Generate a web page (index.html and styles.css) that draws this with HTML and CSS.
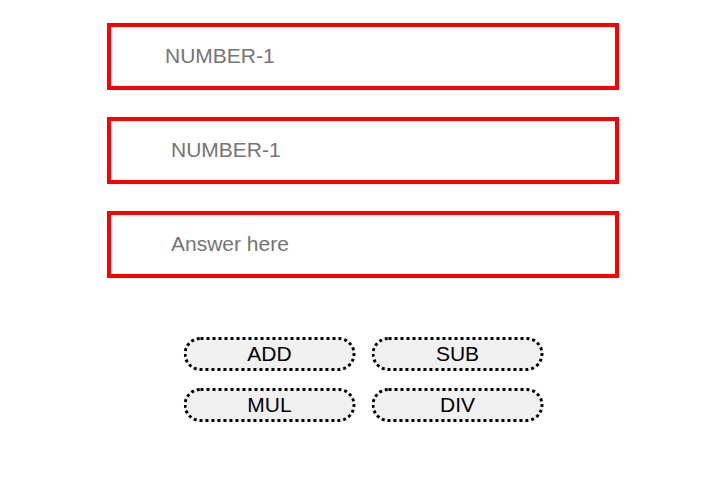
FILE: index.html
```html
<!DOCTYPE html>
<html>
<head>
<meta charset="utf-8">
<link rel="stylesheet" href="styles.css">
</head>
<body>
<div class="calc">
  <input class="field field-first" type="text" placeholder="NUMBER-1">
  <input class="field" type="text" placeholder="NUMBER-1">
  <input class="field" type="text" placeholder="Answer here">
  <div class="ops">
    <button class="op">ADD</button>
    <button class="op">SUB</button>
    <button class="op">MUL</button>
    <button class="op">DIV</button>
  </div>
</div>
</body>
</html>
```
FILE: styles.css
```css
body {
  margin: 8px;
  background: #ffffff;
  font-family: "Liberation Sans", Arial, sans-serif;
}
.calc {
  width: 512px;
  margin: 15px 0 0 99px;
  display: flex;
  flex-direction: column;
  gap: 27px;
}
.field {
  box-sizing: border-box;
  width: 512px;
  height: 67px;
  border: 4px solid #ff0000;
  padding: 0 0 2px 60px;
  margin: 0;
  font-family: "Liberation Sans", Arial, sans-serif;
  font-size: 21px;
  color: #000;
  background: #fff;
  outline: none;
}
.field-first {
  padding-left: 54px;
}
.field::placeholder {
  color: #757575;
}
.ops {
  margin-top: 32px;
  align-self: center;
  display: grid;
  grid-template-columns: 172px 172px;
  column-gap: 16px;
  row-gap: 17px;
  transform: translateX(0.5px);
}
.op {
  box-sizing: border-box;
  height: 34px;
  border: 3px dotted #000;
  border-radius: 17px;
  background: #f0f0f0;
  font-family: "Liberation Sans", Arial, sans-serif;
  font-size: 21px;
  color: #000;
  padding: 0;
}
```
